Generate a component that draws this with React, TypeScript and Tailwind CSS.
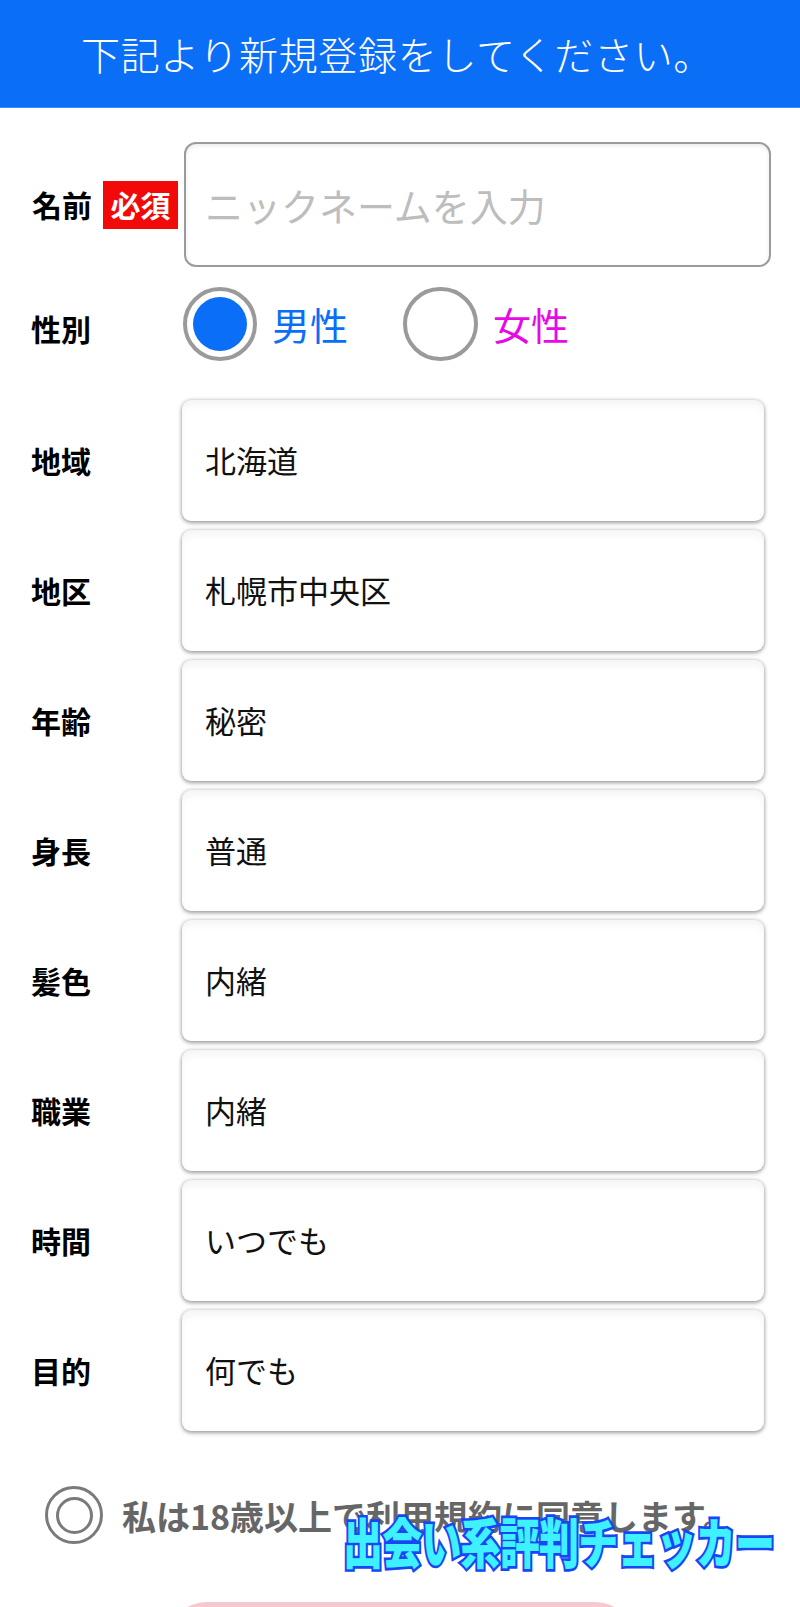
const FONT = "font-['Noto_Sans_CJK_JP','Noto_Sans',sans-serif]";

const SELECTS: { label: string; value: string }[] = [
  { label: "地域", value: "北海道" },
  { label: "地区", value: "札幌市中央区" },
  { label: "年齢", value: "秘密" },
  { label: "身長", value: "普通" },
  { label: "髪色", value: "内緒" },
  { label: "職業", value: "内緒" },
  { label: "時間", value: "いつでも" },
  { label: "目的", value: "何でも" },
];

function SelectRow({ label, value }: { label: string; value: string }) {
  return (
    <div className="flex items-center h-[121px] mb-[9px]">
      <div className="w-[182px] pl-[31px] text-[30px] font-bold text-black">{label}</div>
      <div className="w-[582px] h-full flex items-center pl-[23px] rounded-[9px] bg-white text-[31px] text-[#111] shadow-[0_2px_4px_rgba(0,0,0,0.32),0_0_4px_rgba(0,0,0,0.2),inset_0_6px_6px_rgba(0,0,0,0.04)]">
        {value}
      </div>
    </div>
  );
}

export default function App() {
  return (
    <div className={`${FONT} w-[800px] h-[1607px] overflow-hidden bg-white`}>
      <header className="h-[108px] bg-[#0b6ef7] border-b border-[#3d8cff] flex items-center justify-center pr-[6px]">
        <h1 className="text-white text-[39px] font-light tracking-[0.7px]">下記より新規登録をしてください。</h1>
      </header>

      <div className="pt-[34px]">
        {/* name */}
        <div className="flex items-center">
          <div className="w-[184px] pl-[32px] flex items-center">
            <span className="text-[30px] font-bold text-black">名前</span>
            <span className="ml-[11px] w-[75px] h-[48px] bg-[#f20a0a] text-white text-[30px] font-bold flex items-center justify-center">
              必須
            </span>
          </div>
          <div className="w-[587px] h-[125px] rounded-[12px] border-2 border-[#9b9b9b] bg-white flex items-center pl-[19px] shadow-[inset_0_2px_4px_rgba(0,0,0,0.08)]">
            <span className="text-[38px] text-[#bdbdbd]">ニックネームを入力</span>
          </div>
        </div>

        {/* gender */}
        <div className="flex items-center mt-[19px] h-[75px]">
          <div className="w-[183px] pl-[31px] pt-[10px] text-[30px] font-bold text-black">性別</div>
          <div className="w-[74px] h-[74px] rounded-full border-[4px] border-[#9a9a9a] bg-white flex items-center justify-center">
            <div className="w-[54px] h-[54px] rounded-full bg-[#0b6ef7]" />
          </div>
          <span className="ml-[15px] text-[38px] text-[#0b6ef7]">男性</span>
          <div className="ml-[55px] w-[75px] h-[74px] rounded-full border-[4px] border-[#9a9a9a] bg-white" />
          <span className="ml-[15px] text-[38px] text-[#e60be6]">女性</span>
        </div>

        {/* selects */}
        <div className="mt-[39px]">
          {SELECTS.map((s) => (
            <SelectRow key={s.label} label={s.label} value={s.value} />
          ))}
        </div>

        {/* agreement */}
        <div className="relative mt-[55px] flex items-center pl-[45px]">
          <div className="w-[58px] h-[58px] rounded-full border-[3px] border-[#7a7a7a] flex items-center justify-center">
            <div className="w-[37px] h-[37px] rounded-full border-[3px] border-[#7a7a7a]" />
          </div>
          <span className="ml-[19px] text-[34px] font-bold text-[#666]">
            私は18歳以上で利用規約に同意します。
          </span>
          <span className="absolute left-[343px] top-[28px] text-[40px] font-black leading-none text-[#3ff0ff] tracking-[-0.8px] scale-y-[1.35] origin-top [-webkit-text-stroke:4px_#1846f5] [paint-order:stroke_fill]">
            出会い系評判チェッカー
          </span>
        </div>

        {/* submit button (cut off) */}
        <div className="mt-[58px] ml-[167px] w-[468px] h-[80px] rounded-full bg-[#f7c9cf]" />
      </div>
    </div>
  );
}
